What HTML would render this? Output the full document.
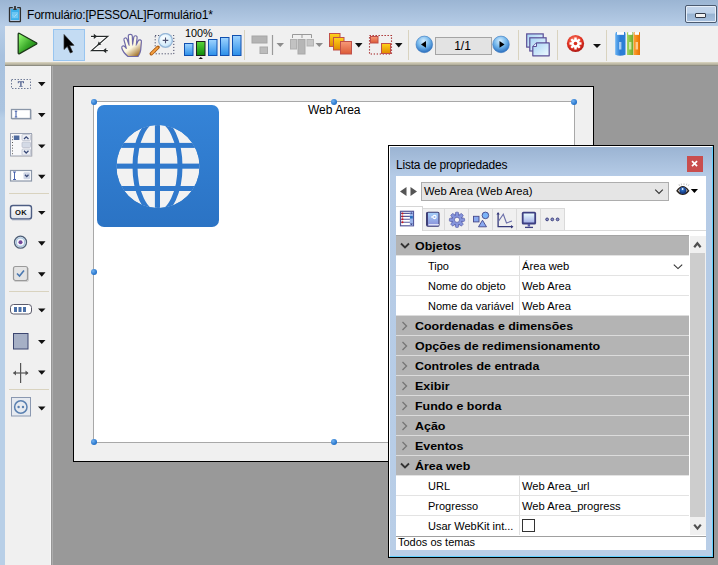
<!DOCTYPE html>
<html><head><meta charset="utf-8">
<style>
*{margin:0;padding:0;box-sizing:border-box}
html,body{width:718px;height:565px;overflow:hidden;background:#999999;font-family:"Liberation Sans",sans-serif;}
.a{position:absolute}
#title{left:0;top:0;width:718px;height:26px;background:linear-gradient(#9bb5d3,#b7cde7)}
#ttext{left:27px;top:8px;font-size:12px;letter-spacing:-0.2px;color:#000;white-space:nowrap}
#lframe{left:0;top:26px;width:5px;height:539px;background:linear-gradient(#b7cde7 0,#b0c8e3 14px,#a8c1de 30px,#abc4e0 84px,#b8cfe7 92px,#b8cfe7 100%)}
#toolbar{left:5px;top:26px;width:713px;height:36px;background:#f0f0f0}
#tbline{left:5px;top:62px;width:713px;height:4px;background:linear-gradient(#d4cfbb 0,#d4cfbb 1px,#c4bfab 1px,#c4bfab 2px,#b5b19e 2px,#b5b19e 3px,#8e8d82 3px)}
#palette{left:5px;top:66px;width:46px;height:499px;background:#f0f0f0}
#palshadow{left:50px;top:66px;width:3px;height:499px;background:linear-gradient(90deg,#f6f6f6 0,#f6f6f6 1px,#969696 1px,#969696 2px,#adadad 2px)}
.sep{background:#d9d3bf}
.tri{width:0;height:0;border-left:4px solid transparent;border-right:4px solid transparent;border-top:4px solid #111}
#page{left:73px;top:86px;width:521px;height:376px;border:1px solid #000;background:#f0f0f0}
#web{left:93px;top:101px;width:482px;height:342px;border:1px solid #a8a8a8;background:#fff}
.h{width:6px;height:6px;border-radius:50%;background:radial-gradient(circle at 35% 35%,#6fb0f0,#1f6fc8 70%,#1a5aa8)}
#panel{left:388px;top:145px;width:326px;height:413px;border:1px solid #000;background:linear-gradient(#9ab3d2 0px,#b5cbe6 30px,#b9cee7 100%)}
#pinner{left:0;top:0;width:324px;height:411px;border-left:1px solid #fff;border-top:1px solid #fff;border-right:1px solid #5fd0ff;border-bottom:1px solid #5fd0ff}
#ptitle{left:396px;top:158px;font-size:12px;letter-spacing:-0.2px;color:#000;white-space:nowrap}
#close{left:687px;top:156px;width:16px;height:16px;background:#c94d4d;color:#fff;font-weight:bold;font-size:10px;text-align:center;line-height:15px}
#content{left:396px;top:176px;width:310px;height:374px;background:#fff}
.txt{font-size:11px;color:#000;white-space:nowrap}
.hdr{left:396px;width:293px;height:20px;border-top:1px solid #dcdcdc;background:#b4b4b4}
.hdr span{position:absolute;left:19px;top:4px;font-weight:bold;font-size:11px;color:#000;white-space:nowrap;transform:scaleX(1.13);transform-origin:0 0}
.row{left:396px;width:293px;height:20px;border-top:1px solid #e3e3e3;background:#fff}
.row .k{position:absolute;left:32px;top:4px;font-size:11px;white-space:nowrap}
.row .v{position:absolute;left:126px;top:4px;font-size:11.2px;white-space:nowrap}
.row .d{position:absolute;left:123px;top:-1px;width:1px;height:20px;background:#e0e0e0}
</style></head><body>
<div class="a" id="title"></div>
<!-- title icon -->
<svg class="a" style="left:8px;top:5px" width="14" height="18" viewBox="0 0 14 18">
 <rect x="2.8" y="4" width="8.3" height="11" fill="#3cb0ea"/>
 <rect x="3.8" y="7" width="6.3" height="6.2" fill="#6cc6f2"/>
 <path d="M4.6 10.2 L6.3 11.8 L9.4 8.6" fill="none" stroke="#c4ecff" stroke-width="0.9" stroke-dasharray="1 0.8"/>
 <path d="M4.8 2.6 H1.7 Q1.5 2.6 1.5 3 V16.2 Q1.5 16.6 2 16.6 H12 Q12.4 16.6 12.4 16.2 V3 Q12.4 2.6 12 2.6 H9.2" fill="none" stroke="#2e2e2e" stroke-width="1.3"/>
 <path d="M7 1 V4" stroke="#333" stroke-width="1.8"/>
 <path d="M5.3 4.3 H8.7" stroke="#333" stroke-width="1.3"/>
</svg>
<div class="a" id="ttext">Formulário:[PESSOAL]Formulário1*</div>
<!-- minimize button -->
<div class="a" style="left:685px;top:5px;width:32px;height:18px;border:1px solid #4b5a70;border-radius:2px;background:linear-gradient(#c4d6ec 0,#bed2ea 45%,#97b3d2 50%,#a9c2e0 100%);box-shadow:inset 0 0 0 1px #e6eef8"></div>
<div class="a" style="left:695px;top:13px;width:11px;height:5px;border:1px solid #333a48;border-radius:1px;background:#f2f2f2"></div>

<div class="a" id="lframe"></div>
<div class="a" id="toolbar"></div>
<div class="a" id="tbline"></div>
<div class="a" id="palette"></div>
<div class="a" id="palshadow"></div>

<!-- ========== TOOLBAR ICONS ========== -->
<!-- play -->
<svg class="a" style="left:16px;top:32px" width="23" height="24" viewBox="0 0 23 24">
 <defs><linearGradient id="gplay" x1="0" y1="0.2" x2="0.8" y2="1"><stop offset="0" stop-color="#8cf56a"/><stop offset="0.55" stop-color="#3aa82a"/><stop offset="1" stop-color="#0e7a0c"/></linearGradient></defs>
 <path d="M2.2 2.2 Q2.2 0.8 3.6 1.5 L20.3 10.8 Q21.4 11.5 20.3 12.2 L3.6 21.6 Q2.2 22.3 2.2 20.8 Z" fill="url(#gplay)" stroke="#1c3818" stroke-width="1.3" stroke-linejoin="round"/>
</svg>
<!-- selected arrow button -->
<div class="a" style="left:53px;top:29px;width:32px;height:32px;background:#c4dcf3;border:1px solid #98c5f0"></div>
<svg class="a" style="left:62px;top:33px" width="14" height="22" viewBox="0 0 14 22">
 <path d="M2 1.5 L2 16.5 L5.3 13.4 L8.3 20 L10.6 19 L7.7 12.6 L12 12.3 Z" fill="#000" stroke="#333" stroke-width="0.7" stroke-linejoin="round"/>
</svg>
<!-- Z icon -->
<svg class="a" style="left:88px;top:32px" width="23" height="24" viewBox="0 0 23 24">
 <g stroke="#fff" stroke-width="3.2" fill="none" opacity="0.9" stroke-linejoin="round"><path d="M3 4.4 H19.8 L3.5 18.6 H19.8"/></g>
 <path d="M3 4.4 H19.8 L3.5 18.6 H19.8" fill="none" stroke="#262a2a" stroke-width="1.2" stroke-linejoin="miter"/>
 <path d="M5.8 1.8 L9.2 4.4 L5.8 7 Z" fill="#262a2a"/>
 <path d="M9.3 13.5 L10.7 9.6 L13.3 12.6 Z" fill="#262a2a"/>
 <path d="M18.2 16 L14.8 18.6 L18.2 21.2 Z" fill="#262a2a"/>
</svg>
<!-- hand -->
<svg class="a" style="left:116px;top:30px" width="30" height="30" viewBox="0 0 30 30">
 <defs><linearGradient id="ghand" x1="0.25" y1="0.2" x2="0.75" y2="1"><stop offset="0" stop-color="#fffff0"/><stop offset="0.5" stop-color="#fbf6de"/><stop offset="1" stop-color="#a07028"/></linearGradient></defs>
 <path d="M12 26.5 C9 24 6.5 21 5.8 18 C5.4 16 7.6 15.2 8.8 16.6 L10.3 18.3 L8 10 C7.5 8 10.2 7 11 9 L12.9 14.5 L12.3 6 C12.2 3.8 16.2 3.8 16.3 6 L16.6 14.2 L17.8 7.2 C18.2 5 21.4 5.4 21.1 7.6 L20.4 14.5 L22.2 10.8 C23 9 25.9 9.8 25.4 11.8 L24.7 20 C24.4 23 23 25 22 26.5 Z" fill="url(#ghand)" stroke="#6f6aa8" stroke-width="1.2" stroke-linejoin="round"/>
 <path d="M12.9 14.5 L13.3 16 M16.6 14.2 L16.6 15.5 M20.4 14.5 L20 15.8" stroke="#8a86b8" stroke-width="0.9"/>
</svg>
<!-- zoom -->
<svg class="a" style="left:149px;top:33px" width="28" height="24" viewBox="0 0 28 24">
 <defs><radialGradient id="glens" cx="0.4" cy="0.35" r="0.7"><stop offset="0" stop-color="#ffffff"/><stop offset="0.7" stop-color="#d8eefc"/><stop offset="1" stop-color="#b0d4f0"/></radialGradient></defs>
 <rect x="6.2" y="2.5" width="18.6" height="18.3" fill="none" stroke="#2a2e50" stroke-width="1" stroke-dasharray="1 2"/>
 <path d="M2.3 20.8 L9 14.2" stroke="#a85a10" stroke-width="3.4" stroke-linecap="round"/>
 <path d="M2.6 20.5 L8.6 14.6" stroke="#f6a040" stroke-width="1.8" stroke-linecap="round"/>
 <circle cx="16.5" cy="7.4" r="6.9" fill="url(#glens)" stroke="#98b8d8" stroke-width="1.3"/>
 <path d="M16.5 4.6 V10.2 M13.7 7.4 H19.3" stroke="#4a5070" stroke-width="1.1"/>
</svg>
<!-- 100% -->
<div class="a" style="left:185px;top:27px;font-size:10.8px;white-space:nowrap">100%</div>
<svg class="a" style="left:183px;top:34px" width="60" height="27" viewBox="0 0 60 27">
 <defs><linearGradient id="gbar" x1="0" y1="0" x2="0" y2="1"><stop offset="0" stop-color="#9fd4ff"/><stop offset="1" stop-color="#2a8ee8"/></linearGradient>
 <linearGradient id="ggreen" x1="0" y1="0" x2="0" y2="1"><stop offset="0" stop-color="#5ad43a"/><stop offset="1" stop-color="#0f8a0a"/></linearGradient></defs>
 <rect x="1.5" y="9.5" width="8.5" height="12" fill="url(#gbar)" stroke="#1050b0" stroke-width="1"/>
 <rect x="13.5" y="7.5" width="8.5" height="14" fill="url(#ggreen)" stroke="#202020" stroke-width="1"/>
 <rect x="25.5" y="5.5" width="8.5" height="16" fill="url(#gbar)" stroke="#1050b0" stroke-width="1"/>
 <rect x="37.5" y="3.5" width="8.5" height="18" fill="url(#gbar)" stroke="#1050b0" stroke-width="1"/>
 <rect x="49.5" y="1.5" width="8.5" height="20" fill="url(#gbar)" stroke="#1050b0" stroke-width="1"/>
 <path d="M15.5 25 L17.75 23 L20 25 Z" fill="#111"/>
</svg>
<div class="a sep" style="left:244px;top:30px;width:1px;height:30px"></div>
<!-- align (disabled) -->
<svg class="a" style="left:250px;top:33px" width="76" height="24" viewBox="0 0 76 24">
 <rect x="2" y="3" width="15" height="7" fill="#b4b4b4" stroke="#a6a6a6"/>
 <rect x="10" y="14" width="7.5" height="6.5" fill="#bcbcbc" stroke="#aaa"/>
 <path d="M22.5 2 V22" stroke="#9a9a9a" stroke-width="1.2"/>
 <path d="M26.5 10 L34 10 L30.25 14 Z" fill="#8c8c8c"/>
 <path d="M42.5 5 V1.5 H61.5 V5 M52 1.5 V5" fill="none" stroke="#999" stroke-width="1"/>
 <rect x="40.5" y="6.5" width="6" height="9.5" fill="#c2c2c2" stroke="#b0b0b0"/>
 <rect x="48" y="6.5" width="7" height="14.5" fill="#b6b6b6" stroke="#a8a8a8"/>
 <rect x="57" y="6.5" width="6.5" height="6.5" fill="#c6c6c6" stroke="#b3b3b3"/>
 <path d="M65.5 10 L73 10 L69.25 14 Z" fill="#8c8c8c"/>
</svg>
<!-- layers -->
<svg class="a" style="left:328px;top:32px" width="36" height="24" viewBox="0 0 36 24">
 <defs><linearGradient id="gy" x1="0" y1="0" x2="0" y2="1"><stop offset="0" stop-color="#ffd21a"/><stop offset="1" stop-color="#e08a00"/></linearGradient>
 <linearGradient id="go" x1="0" y1="0" x2="0" y2="1"><stop offset="0" stop-color="#f79a78"/><stop offset="1" stop-color="#dc5a36"/></linearGradient></defs>
 <rect x="1.5" y="1.5" width="10.5" height="13" fill="url(#gy)" stroke="#c0504a"/>
 <rect x="5.5" y="5.5" width="10.5" height="12.5" fill="url(#gy)" stroke="#c0504a"/>
 <rect x="12.5" y="9.5" width="11" height="12.5" fill="url(#go)" stroke="#c0504a"/>
 <path d="M27 11 L34.5 11 L30.75 15.5 Z" fill="#111"/>
</svg>
<!-- dotted rect icon -->
<svg class="a" style="left:368px;top:34px" width="36" height="21" viewBox="0 0 36 21">
 <rect x="1.5" y="1.5" width="22" height="18.5" fill="none" stroke="#a01818" stroke-width="1.1" stroke-dasharray="1.3 1.7"/>
 <rect x="2.5" y="2.5" width="7.5" height="6.5" fill="url(#go)" stroke="#c0504a"/>
 <rect x="13.5" y="9.5" width="9" height="10" fill="url(#gy)" stroke="#c0504a"/>
 <path d="M27 9 L34.5 9 L30.75 13.5 Z" fill="#111"/>
</svg>
<div class="a sep" style="left:408px;top:30px;width:1px;height:30px"></div>
<!-- page nav -->
<svg class="a" style="left:415px;top:35px" width="96" height="20" viewBox="0 0 96 20">
 <defs><radialGradient id="gsph" cx="0.45" cy="0.3" r="0.75"><stop offset="0" stop-color="#d8efff"/><stop offset="0.5" stop-color="#6fb4ea"/><stop offset="1" stop-color="#1f62b6"/></radialGradient></defs>
 <circle cx="9.3" cy="9.4" r="8.3" fill="url(#gsph)" stroke="#3a78c0" stroke-width="0.6"/>
 <path d="M6 9.4 L11 6 V12.8 Z" fill="#000"/>
 <circle cx="86" cy="9.4" r="8.3" fill="url(#gsph)" stroke="#3a78c0" stroke-width="0.6"/>
 <path d="M89.5 9.4 L84.5 6 V12.8 Z" fill="#000"/>
</svg>
<div class="a" style="left:435px;top:37px;width:57px;height:18px;border:1px solid #a4a4a4;background:#e3e3e3;font-size:12px;text-align:center;line-height:16px;padding-right:2px">1/1</div>
<div class="a sep" style="left:518px;top:30px;width:1px;height:30px"></div>
<!-- windows icon -->
<svg class="a" style="left:524px;top:31px" width="28" height="27" viewBox="0 0 28 27">
 <defs><linearGradient id="gw" x1="0" y1="0" x2="1" y2="1"><stop offset="0" stop-color="#a6d2f4"/><stop offset="1" stop-color="#effaff"/></linearGradient></defs>
 <rect x="2.7" y="2.9" width="16.5" height="13.2" fill="url(#gw)" stroke="#5a4e96" stroke-width="1.2"/>
 <rect x="5.8" y="6.8" width="16.3" height="13.2" fill="url(#gw)" stroke="#5a4e96" stroke-width="1.2"/>
 <path d="M8.8 15.6 L12.6 11.9 H25.2 V24.8 H8.8 Z" fill="url(#gw)" stroke="#5a4e96" stroke-width="1.2" stroke-linejoin="round"/>
 <path d="M9 15.5 H12.5 V12" fill="#e8f4ff" stroke="#5a4e96" stroke-width="1"/>
</svg>
<div class="a sep" style="left:557px;top:30px;width:1px;height:30px"></div>
<!-- red gear -->
<svg class="a" style="left:566px;top:34px" width="20" height="20" viewBox="0 0 20 20">
 <defs><radialGradient id="gred" cx="0.45" cy="0.35" r="0.7"><stop offset="0" stop-color="#ff8a70"/><stop offset="0.6" stop-color="#e03020"/><stop offset="1" stop-color="#a01010"/></radialGradient></defs>
 <circle cx="9.5" cy="9.5" r="8.6" fill="url(#gred)"/>
 <g transform="translate(9.5 9.5)" fill="#fff">
  <circle r="4.3"/>
  <rect x="-1.2" y="-6" width="2.4" height="12"/>
  <rect x="-6" y="-1.2" width="12" height="2.4"/>
  <rect x="-1.2" y="-6" width="2.4" height="12" transform="rotate(45)"/>
  <rect x="-1.2" y="-6" width="2.4" height="12" transform="rotate(-45)"/>
 </g>
 <circle cx="9.5" cy="9.5" r="1.8" fill="#d83020"/>
</svg>
<div class="a tri" style="left:593px;top:44px"></div>
<div class="a sep" style="left:606px;top:30px;width:1px;height:31px"></div>
<!-- books -->
<svg class="a" style="left:614px;top:31px" width="27" height="26" viewBox="0 0 27 26">
 <defs><linearGradient id="gbb" x1="0" y1="0" x2="1" y2="0"><stop offset="0" stop-color="#6ab4f4"/><stop offset="0.5" stop-color="#2a7cd4"/><stop offset="1" stop-color="#2a80d8"/></linearGradient>
 <linearGradient id="gbg" x1="0" y1="0" x2="1" y2="0"><stop offset="0" stop-color="#a4d860"/><stop offset="1" stop-color="#6aa82c"/></linearGradient>
 <linearGradient id="gbo" x1="0" y1="0" x2="1" y2="0"><stop offset="0" stop-color="#ffa030"/><stop offset="1" stop-color="#e87200"/></linearGradient></defs>
 <path d="M1.2 3 L2 1.1 H3 V3.6 H10 V1.1 H11 L11.5 3 V23.8 Q6 25.8 1.2 23.8 Z" fill="url(#gbb)"/>
 <rect x="3" y="1.3" width="7" height="2.4" fill="#fff"/>
 <path d="M13 2.2 L13.5 1.1 H14.3 V3.6 H18.3 V1.1 H19.1 L19.3 2.2 V24 H13 Z" fill="url(#gbg)"/>
 <rect x="14.3" y="1.3" width="4" height="2.4" fill="#fff"/>
 <path d="M19.6 2.2 L20 1.1 H20.8 V3.6 H25 V1.1 H25.7 L26 2.2 V24 H19.6 Z" fill="url(#gbo)"/>
 <rect x="20.8" y="1.3" width="4.2" height="2.4" fill="#fff"/>
 <rect x="5" y="11" width="2.4" height="7.5" fill="#cfe6fb" opacity="0.75"/>
 <rect x="15" y="11" width="2.4" height="7.5" fill="#e4f4c8" opacity="0.75"/>
 <rect x="21.6" y="11" width="2.4" height="7.5" fill="#ffe0b8" opacity="0.75"/>
</svg>

<!-- ========== PALETTE ========== -->
<svg class="a" style="left:9px;top:76px" width="42" height="345" viewBox="0 0 42 345">
 <!-- text -->
 <rect x="2.5" y="3.5" width="19" height="9" fill="none" stroke="#707c98" stroke-dasharray="1.5 1.5"/>
 <path d="M8.8 5.2 H15 V7.3 H14.2 L13.8 6.3 H12.6 V10.1 H13.6 V10.7 H10.2 V10.1 H11.2 V6.3 H10 L9.6 7.3 H8.8 Z" fill="#566692"/>
 <!-- input -->
 <rect x="2.5" y="33.5" width="19" height="9" fill="#fff" stroke="#8a96a8" stroke-width="1.3"/>
 <path d="M3 43.5 H22.5 V34" fill="none" stroke="#c0c4cc" stroke-width="0.8"/>
 <path d="M5.8 35.2 H8.2 M7 35.2 V41 M5.8 41 H8.2" stroke="#3a58a8" stroke-width="1"/>
 <!-- list -->
 <rect x="1.5" y="57.5" width="21" height="22.5" fill="#f8f8fa" stroke="#9aa2b4"/>
 <path d="M2.5 80.5 H23 V58" fill="none" stroke="#c4c4c8" stroke-width="1"/>
 <rect x="4.8" y="59.5" width="5.6" height="4.5" fill="#4e6a9e"/>
 <path d="M3.5 60.5 V78.5" stroke="#333" stroke-width="0.9" stroke-dasharray="0.9 1.9"/>
 <rect x="13" y="58.5" width="8.5" height="6" rx="1" fill="#eceef4" stroke="#b8bcc8" stroke-width="0.7"/>
 <rect x="13" y="66" width="8.5" height="5.5" rx="1" fill="#d4dae6" stroke="#b8bcc8" stroke-width="0.7"/>
 <rect x="13" y="73" width="8.5" height="6.2" rx="1" fill="#eceef4" stroke="#b8bcc8" stroke-width="0.7"/>
 <path d="M15 63 L17.2 60.8 L19.5 63 M15 74.8 L17.2 77 L19.5 74.8" fill="none" stroke="#3a4a78" stroke-width="1.3"/>
 <!-- combo -->
 <rect x="1.5" y="94.5" width="21" height="10.5" fill="#fff" stroke="#8a96a8" stroke-width="1.2"/>
 <path d="M4 96 H7 M5.5 96 V103.5 M4 103.5 H7" stroke="#3a58a8" stroke-width="0.9"/>
 <rect x="14.5" y="96.2" width="6.5" height="7" rx="1" fill="#cfd6e6"/>
 <path d="M16 98.8 L17.75 100.6 L19.5 98.8" fill="none" stroke="#3a4a78" stroke-width="1.3"/>
 <!-- OK button -->
 <defs><linearGradient id="gok" x1="0" y1="0" x2="0" y2="1"><stop offset="0" stop-color="#ffffff"/><stop offset="1" stop-color="#dde2ea"/></linearGradient></defs><rect x="1.5" y="129.5" width="21" height="13.5" rx="2.5" fill="url(#gok)" stroke="#4e5e84" stroke-width="1.4"/>
 <path d="M3 144 H21" stroke="#b4bac8" stroke-width="0.8"/>
 <text x="12" y="139.2" font-family="Liberation Sans" font-weight="bold" font-size="7.6" fill="#111" text-anchor="middle" letter-spacing="0.3">OK</text>
 <!-- radio -->
 <circle cx="11.5" cy="166.2" r="6" fill="#f4f6fa" stroke="#4e5e76" stroke-width="1.3"/>
 <circle cx="11.5" cy="166.2" r="4.3" fill="none" stroke="#a8c4dc" stroke-width="1.4"/>
 <circle cx="11.5" cy="166.2" r="2" fill="#74489a"/>
 <!-- checkbox -->
 <rect x="4.5" y="190.5" width="14" height="14" rx="2" fill="#e4e4e4" stroke="#9a9a9a" stroke-width="1.2"/>
 <path d="M5.5 205.5 H18 Q19.5 205.5 19.5 204 V192" fill="none" stroke="#c8c8c8" stroke-width="0.8"/>
 <path d="M8 197.5 L10.5 200 L15 194.5" fill="none" stroke="#4a78b0" stroke-width="1.6"/>
 <!-- progress -->
 <rect x="1.5" y="228.5" width="21" height="9.5" rx="3" fill="#fff" stroke="#5a5a6a"/>
 <rect x="5" y="231" width="3" height="5" fill="#4a70a8"/>
 <rect x="9.5" y="231" width="3" height="5" fill="#4a70a8"/>
 <rect x="14" y="231" width="3" height="5" fill="#4a70a8"/>
 <!-- rectangle -->
 <rect x="4.5" y="257.5" width="14.5" height="15.5" fill="#a6b0c6" stroke="#3c4670"/>
 <!-- splitter -->
 <path d="M11.6 287 V307" stroke="#555" stroke-width="1.2"/>
 <path d="M4.5 297 H19" stroke="#555" stroke-width="1.2"/>
 <path d="M4 297 L7 294.5 V299.5 Z M19.5 297 L16.5 294.5 V299.5 Z" fill="#555"/>
 <!-- subform -->
 <rect x="2.5" y="321.5" width="19" height="18.5" fill="#e6eaf0" stroke="#8a98b0"/>
 <circle cx="11.8" cy="331" r="6.2" fill="none" stroke="#5a80b0" stroke-width="1.5"/>
 <circle cx="9.6" cy="331" r="1.2" fill="#5a80b0"/>
 <circle cx="14" cy="331" r="1.2" fill="#5a80b0"/>
 <!-- triangles -->
 <path d="M29 6 H36.5 L32.75 10.3 Z M29 37 H36.5 L32.75 41.2 Z M29 68.4 H36.5 L32.75 72.2 Z M29 98.8 H36.5 L32.75 103 Z M29 134.9 H36.5 L32.75 138.8 Z M29 165.3 H36.5 L32.75 169.8 Z M29 196.3 H36.5 L32.75 200.7 Z M29 232.5 H36.5 L32.75 236.3 Z M29 264 H36.5 L32.75 268 Z M29 294.5 H36.5 L32.75 298.7 Z M29 330.4 H36.5 L32.75 334.6 Z" fill="#111"/>
</svg>
<div class="a sep" style="left:9px;top:193px;width:40px;height:1px"></div>
<div class="a sep" style="left:9px;top:291px;width:40px;height:1px"></div>
<div class="a sep" style="left:9px;top:389px;width:40px;height:1px"></div>

<!-- ========== FORM PAGE ========== -->
<div class="a" id="page"></div>
<div class="a" id="web"></div>
<div class="a" style="left:308px;top:103px;font-size:12px;white-space:nowrap">Web Area</div>
<!-- globe icon -->
<svg class="a" style="left:97px;top:105px" width="122" height="122" viewBox="0 0 122 122">
 <defs><linearGradient id="gico" x1="0" y1="0" x2="0" y2="1"><stop offset="0" stop-color="#3584d8"/><stop offset="1" stop-color="#2b73c4"/></linearGradient>
 <clipPath id="cglobe"><circle cx="61" cy="61.5" r="41.6"/></clipPath></defs>
 <rect x="0" y="0" width="122" height="122" rx="7" fill="url(#gico)"/>
 <g clip-path="url(#cglobe)">
  <circle cx="61" cy="61.5" r="41.6" fill="#f2f2f2"/>
  <ellipse cx="60.5" cy="61.5" rx="22.5" ry="46.5" fill="none" stroke="#3079cc" stroke-width="5"/>
  <rect x="57.9" y="0" width="5.1" height="122" fill="#3079cc"/>
  <rect x="0" y="37.9" width="122" height="5" fill="#3079cc"/>
  <rect x="0" y="58.6" width="122" height="5.1" fill="#3079cc"/>
  <rect x="0" y="81" width="122" height="5" fill="#3079cc"/>
 </g>
</svg>
<!-- handles -->
<div class="a h" style="left:91px;top:99px"></div>
<div class="a h" style="left:331px;top:99px"></div>
<div class="a h" style="left:571px;top:99px"></div>
<div class="a h" style="left:91px;top:269px"></div>
<div class="a h" style="left:91px;top:439px"></div>
<div class="a h" style="left:331px;top:439px"></div>

<!-- ========== PROPERTY PANEL ========== -->
<div class="a" id="panel"><div class="a" id="pinner"></div></div>
<div class="a" id="ptitle">Lista de propriedades</div>
<div class="a" id="close"><svg width="16" height="16" viewBox="0 0 16 16" style="position:absolute;left:0;top:0"><path d="M5 5.2 L10.1 10.1 M10.1 5.2 L5 10.1" stroke="#fff" stroke-width="1.7"/></svg></div>
<div class="a" id="content"></div>
<!-- nav arrows -->
<svg class="a" style="left:400px;top:187px" width="18" height="9" viewBox="0 0 18 9">
 <path d="M0 4.5 L6.5 0 V9 Z M17 4.5 L10.5 0 V9 Z" fill="#555"/>
</svg>
<div class="a" style="left:421px;top:182px;width:248px;height:19px;border:1px solid #adadad;background:#e5e5e5"></div>
<div class="a txt" style="left:424px;top:185px;font-size:11.2px">Web Area (Web Area)</div>
<svg class="a" style="left:654px;top:188px" width="10" height="7" viewBox="0 0 10 7"><path d="M1.2 1.6 L5 5.4 L8.8 1.6" fill="none" stroke="#333" stroke-width="1.1"/></svg>
<!-- eye -->
<svg class="a" style="left:676px;top:183px" width="24" height="14" viewBox="0 0 24 14">
 <defs><radialGradient id="giris" cx="0.45" cy="0.4" r="0.6"><stop offset="0" stop-color="#3a80d8"/><stop offset="1" stop-color="#0a2a70"/></radialGradient>
 <linearGradient id="gscl" x1="0" y1="0" x2="1" y2="0"><stop offset="0" stop-color="#e8d0b0"/><stop offset="0.5" stop-color="#ffffff"/><stop offset="1" stop-color="#e0c8a8"/></linearGradient></defs>
 <path d="M3.5 3 L3 1.2 M5.5 2.3 L5.3 0.5 M8 2 V0.3 M10.3 2.3 L10.8 0.6 M12 3 L13 1.4" stroke="#b0b0b0" stroke-width="0.7"/>
 <path d="M1 7.8 Q6.8 -0.6 12.6 7.8 Q6.8 15 1 7.8 Z" fill="url(#gscl)" stroke="#2a2420" stroke-width="1.4"/>
 <circle cx="6.9" cy="7.4" r="3.5" fill="url(#giris)"/>
 <circle cx="6.6" cy="6" r="0.9" fill="#e8f4ff"/>
 <path d="M14.8 6 H22 L18.4 10 Z" fill="#000"/>
</svg>
<!-- tabs -->
<div class="a" style="left:423px;top:208px;width:142px;height:22px;background:#f0f0f0;border-top:1px solid #dadada"></div>
<div class="a" style="left:444px;top:208px;width:1px;height:22px;background:#dadada"></div>
<div class="a" style="left:468px;top:208px;width:1px;height:22px;background:#dadada"></div>
<div class="a" style="left:492px;top:208px;width:1px;height:22px;background:#dadada"></div>
<div class="a" style="left:516px;top:208px;width:1px;height:22px;background:#dadada"></div>
<div class="a" style="left:540px;top:208px;width:1px;height:22px;background:#dadada"></div>
<div class="a" style="left:564px;top:208px;width:1px;height:22px;background:#dadada"></div>
<div class="a" style="left:423px;top:230px;width:283px;height:1px;background:#dadada"></div>
<div class="a" style="left:396px;top:206px;width:27px;height:25px;background:#fff;border-top:1px solid #d6d6d6;border-right:1px solid #d6d6d6"></div>
<svg class="a" style="left:399px;top:210px" width="170" height="19" viewBox="0 0 170 19">
 <defs><linearGradient id="gbook" x1="0" y1="0" x2="0" y2="1"><stop offset="0" stop-color="#a4d0fa"/><stop offset="1" stop-color="#8a8ed8"/></linearGradient>
 <linearGradient id="gscr" x1="0" y1="0" x2="0" y2="1"><stop offset="0" stop-color="#e8fbff"/><stop offset="1" stop-color="#a8b4e8"/></linearGradient></defs>
 <!-- list icon -->
 <rect x="1.5" y="1.3" width="13" height="14.5" fill="#fff" stroke="#55589a" stroke-width="1.2"/>
 <path d="M2 3.4 H11 M2 6.4 H11 M2 9.3 H11 M2 12.3 H11" stroke="#55589a" stroke-width="1.1"/>
 <rect x="10.8" y="2" width="3.2" height="13.3" fill="#9ab4ea"/>
 <rect x="11" y="6" width="2.8" height="2.5" fill="#2a70c0"/>
 <path d="M11 3.8 L12.4 2.2 L13.8 3.8 Z M11 13.6 L12.4 15.2 L13.8 13.6 Z" fill="#3a3e80"/>
 <circle cx="3.5" cy="3.4" r="1" fill="#d01818"/><circle cx="3.5" cy="6.4" r="1" fill="#d01818"/><circle cx="3.5" cy="9.3" r="1" fill="#d01818"/><circle cx="3.5" cy="12.3" r="1" fill="#d01818"/>
 <!-- book -->
 <rect x="27.8" y="2.2" width="12.2" height="14" rx="1.3" fill="url(#gbook)" stroke="#3a3a72" stroke-width="1.1"/>
 <path d="M28 2.5 V15.5" stroke="#3a3a72" stroke-width="1.8"/>
 <path d="M29.5 14.8 H40" stroke="#fff" stroke-width="1"/>
 <circle cx="35.5" cy="7" r="1.6" fill="none" stroke="#fff" stroke-width="1.1"/>
 <path d="M32 7 H34" stroke="#fff" stroke-width="1.1"/>
 <!-- gear -->
 <g transform="translate(58 9.8)">
  <g fill="#8494dc" stroke="#5a60a8" stroke-width="0.7">
   <circle r="5.6"/>
   <rect x="-1.6" y="-7.6" width="3.2" height="15.2" rx="0.8"/><rect x="-7.6" y="-1.6" width="15.2" height="3.2" rx="0.8"/>
   <rect x="-1.6" y="-7.6" width="3.2" height="15.2" rx="0.8" transform="rotate(45)"/><rect x="-1.6" y="-7.6" width="3.2" height="15.2" rx="0.8" transform="rotate(-45)"/>
  </g>
  <circle r="4.4" fill="#8494dc"/>
  <circle r="2.6" fill="#f4f4f4" stroke="#5a60a8" stroke-width="0.8"/>
 </g>
 <!-- shapes -->
 <rect x="74.5" y="6.3" width="5.5" height="5.6" fill="#88a8ee" stroke="#45488a" stroke-width="0.9"/>
 <circle cx="86.4" cy="5.4" r="3.3" fill="#7ab4f8" stroke="#45488a" stroke-width="0.9"/>
 <path d="M79.5 16.8 L83.5 10.2 L87.5 16.8 Z" fill="#8aaaf0" stroke="#45488a" stroke-width="0.9" stroke-linejoin="round"/>
 <!-- graph -->
 <path d="M99.1 2.8 V16.7 H113.5" fill="none" stroke="#35397a" stroke-width="1.3"/>
 <path d="M97.4 4.6 L99.1 2.3 L100.8 4.6 Z M112 15 L114.5 16.7 L112 18.4 Z" fill="#35397a"/>
 <path d="M99.3 11.5 L104.3 4.2 L107.5 13 L113 11" fill="none" stroke="#6a6ea8" stroke-width="1.1"/>
 <!-- monitor -->
 <rect x="122.8" y="1.8" width="14.3" height="12.7" rx="1.6" fill="#3d3f82"/>
 <rect x="124.6" y="3.5" width="10.7" height="9" fill="url(#gscr)"/>
 <path d="M129.9 14 V16.5" stroke="#5a5ea8" stroke-width="2.4"/>
 <path d="M126 17.4 H134" stroke="#3d3f82" stroke-width="1.3"/>
 <!-- dots -->
 <circle cx="148.1" cy="9.4" r="1.4" fill="#8a90c8" stroke="#40447e" stroke-width="1"/>
 <circle cx="153.3" cy="9.4" r="1.4" fill="#8a90c8" stroke="#40447e" stroke-width="1"/>
 <circle cx="158.6" cy="9.4" r="1.4" fill="#8a90c8" stroke="#40447e" stroke-width="1"/>
</svg>

<!-- grid -->
<div class="a hdr" style="top:235px;border-top-color:#a4a4a4"><span>Objetos</span></div>
<div class="a row" style="top:255px"><span class="k">Tipo</span><span class="d"></span><span class="v">Área web</span></div>
<div class="a row" style="top:275px"><span class="k">Nome do objeto</span><span class="d"></span><span class="v">Web Area</span></div>
<div class="a row" style="top:295px"><span class="k">Nome da variável</span><span class="d"></span><span class="v">Web Area</span></div>
<div class="a hdr" style="top:315px"><span>Coordenadas e dimensões</span></div>
<div class="a hdr" style="top:335px"><span>Opções de redimensionamento</span></div>
<div class="a hdr" style="top:355px"><span>Controles de entrada</span></div>
<div class="a hdr" style="top:375px"><span>Exibir</span></div>
<div class="a hdr" style="top:395px"><span>Fundo e borda</span></div>
<div class="a hdr" style="top:415px"><span>Ação</span></div>
<div class="a hdr" style="top:435px"><span>Eventos</span></div>
<div class="a hdr" style="top:455px"><span>Área web</span></div>
<div class="a row" style="top:475px"><span class="k">URL</span><span class="d"></span><span class="v">Web Area_url</span></div>
<div class="a row" style="top:495px"><span class="k">Progresso</span><span class="d"></span><span class="v">Web Area_progress</span></div>
<div class="a row" style="top:515px;border-bottom:none"><span class="k">Usar WebKit int...</span><span class="d"></span></div>
<div class="a" style="left:522px;top:519px;width:13px;height:13px;border:1px solid #333;background:#fff"></div>
<!-- chevrons -->
<svg class="a" style="left:396px;top:235px" width="293" height="240" viewBox="0 0 293 240">
 <g fill="none" stroke="#333" stroke-width="1.8">
  <path d="M5 8.5 L9 12.5 L13 8.5"/>
  <path d="M5 228.5 L9 232.5 L13 228.5"/>
 </g>
 <g fill="none" stroke="#777" stroke-width="1.4">
  <path d="M6.5 87 L10.5 91 L6.5 95"/>
  <path d="M6.5 107 L10.5 111 L6.5 115"/>
  <path d="M6.5 127 L10.5 131 L6.5 135"/>
  <path d="M6.5 147 L10.5 151 L6.5 155"/>
  <path d="M6.5 167 L10.5 171 L6.5 175"/>
  <path d="M6.5 187 L10.5 191 L6.5 195"/>
  <path d="M6.5 207 L10.5 211 L6.5 215"/>
 </g>
 <path d="M277.8 29.6 L282 33.6 L286.2 29.6" fill="none" stroke="#333" stroke-width="1.1"/>
</svg>
<!-- scrollbar -->
<div class="a" style="left:690px;top:236px;width:16px;height:299px;background:#f0f0f0"></div>
<div class="a" style="left:690px;top:253px;width:15px;height:264px;background:#cdcdcd"></div>
<svg class="a" style="left:690px;top:235px" width="16" height="300" viewBox="0 0 16 300">
 <path d="M4.2 12.3 L7.4 8.3 L10.6 12.3" fill="none" stroke="#505050" stroke-width="2.2"/>
 <path d="M4.2 289.6 L7.5 293.6 L10.8 289.6" fill="none" stroke="#505050" stroke-width="2.2"/>
</svg>
<div class="a" style="left:396px;top:536px;width:310px;height:1px;background:#a0a0a0"></div>
<div class="a txt" style="left:398px;top:536px">Todos os temas</div>
</body></html>
